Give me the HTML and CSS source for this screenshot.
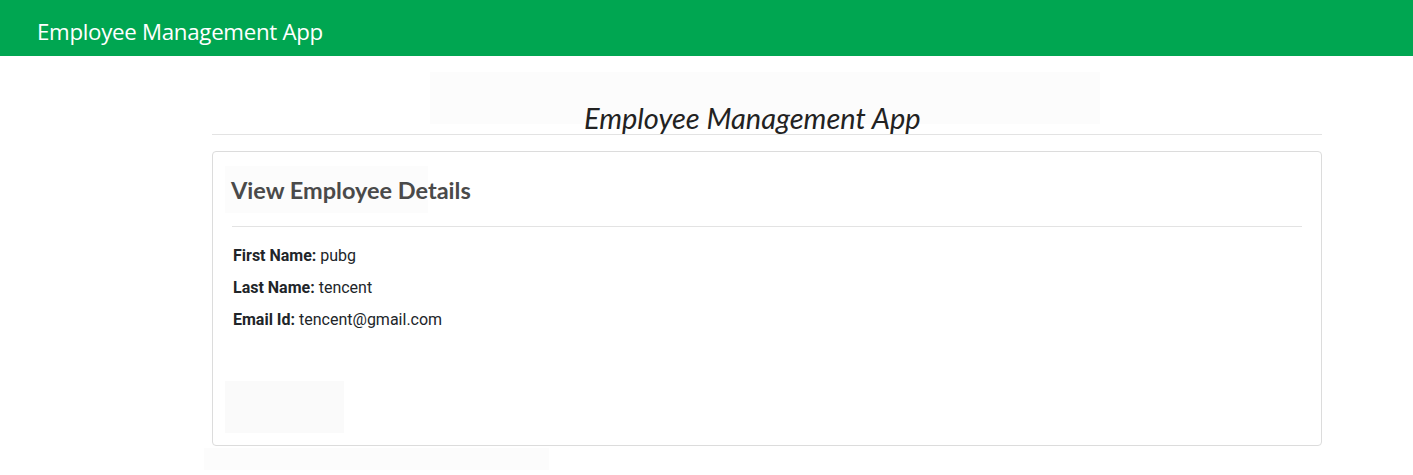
FILE: index.html
```html
<!DOCTYPE html>
<html>
<head>
<meta charset="utf-8">
<link rel="stylesheet" href="styles.css">
</head>
<body>
<header class="topbar"><span class="brand">Employee Management App</span></header>
<main class="container">
  <div class="title-wrap">
    <div class="title-box"><h2 class="page-title">Employee Management App</h2></div>
  </div>
  <hr class="title-rule">
  <section class="card">
    <div class="card-head"><h3 class="card-title">View Employee Details</h3></div>
    <hr class="card-rule">
    <div class="details">
      <p class="row"><b>First Name:</b> pubg</p>
      <p class="row"><b>Last Name:</b> tencent</p>
      <p class="row"><b>Email Id:</b> tencent@gmail.com</p>
    </div>
    <div class="placeholder"></div>
  </section>
  <div class="bottom-placeholder"></div>
</main>
</body>
</html>
```
FILE: styles.css
```css
* { box-sizing: border-box; }
html, body { margin: 0; padding: 0; background: #fff; }
body { font-family: Roboto, "Open Sans", sans-serif; color: #212529; }
.topbar {
  height: 56px;
  background: #00a651;
  display: flex;
  align-items: center;
  padding-left: 37px;
  padding-top: 7px;
}
.brand {
  color: #fff;
  font-family: "Open Sans", sans-serif;
  font-size: 22.3px;
  letter-spacing: -0.3px;
}
.container {
  width: 1110px;
  margin-left: 212px;
}
.title-wrap {
  display: flex;
  padding-top: 16px;
  padding-left: 218px;
  padding-right: 222px;
  height: 78px;
}
.title-box {
  flex: 1;
  height: 52px;
  background: #fcfcfc;
  display: flex;
  justify-content: flex-start;
}
.page-title {
  margin: 0;
  margin-top: 30px;
  margin-left: 154px;
  font-family: Lato, sans-serif;
  font-style: italic;
  font-weight: 400;
  font-size: 29px;
  line-height: 32px;
  color: #222;
  white-space: nowrap;
}
.title-rule {
  margin: 0;
  border: 0;
  border-top: 1px solid #e3e3e3;
}
.card {
  margin-top: 16px;
  border: 1px solid #dcdcdc;
  border-radius: 4px;
  padding: 14px 19px 12px 12px;
  height: 295px;
}
.card-head {
  width: 203px;
  height: 47px;
  background: #fcfcfc;
  display: flex;
  align-items: center;
  white-space: nowrap;
}
.card-title {
  margin: 0 0 0 6px;
  font-family: Lato, sans-serif;
  font-weight: 700;
  font-size: 23.5px;
  color: #4a4a4a;
}
.card-rule {
  margin: 13px 0 0 7px;
  border: 0;
  border-top: 1px solid #e3e3e3;
}
.details { padding: 13px 0 0 8px; }
.row {
  margin: 0;
  font-size: 16px;
  line-height: 32px;
  color: #212529;
}
.row b { font-weight: 700; }
.placeholder {
  margin-top: 45px;
  width: 119px;
  height: 52px;
  background: #fafafa;
}
.bottom-placeholder {
  margin: 2px 0 0 -8px;
  width: 345px;
  height: 22px;
  background: #fcfcfc;
}
```
